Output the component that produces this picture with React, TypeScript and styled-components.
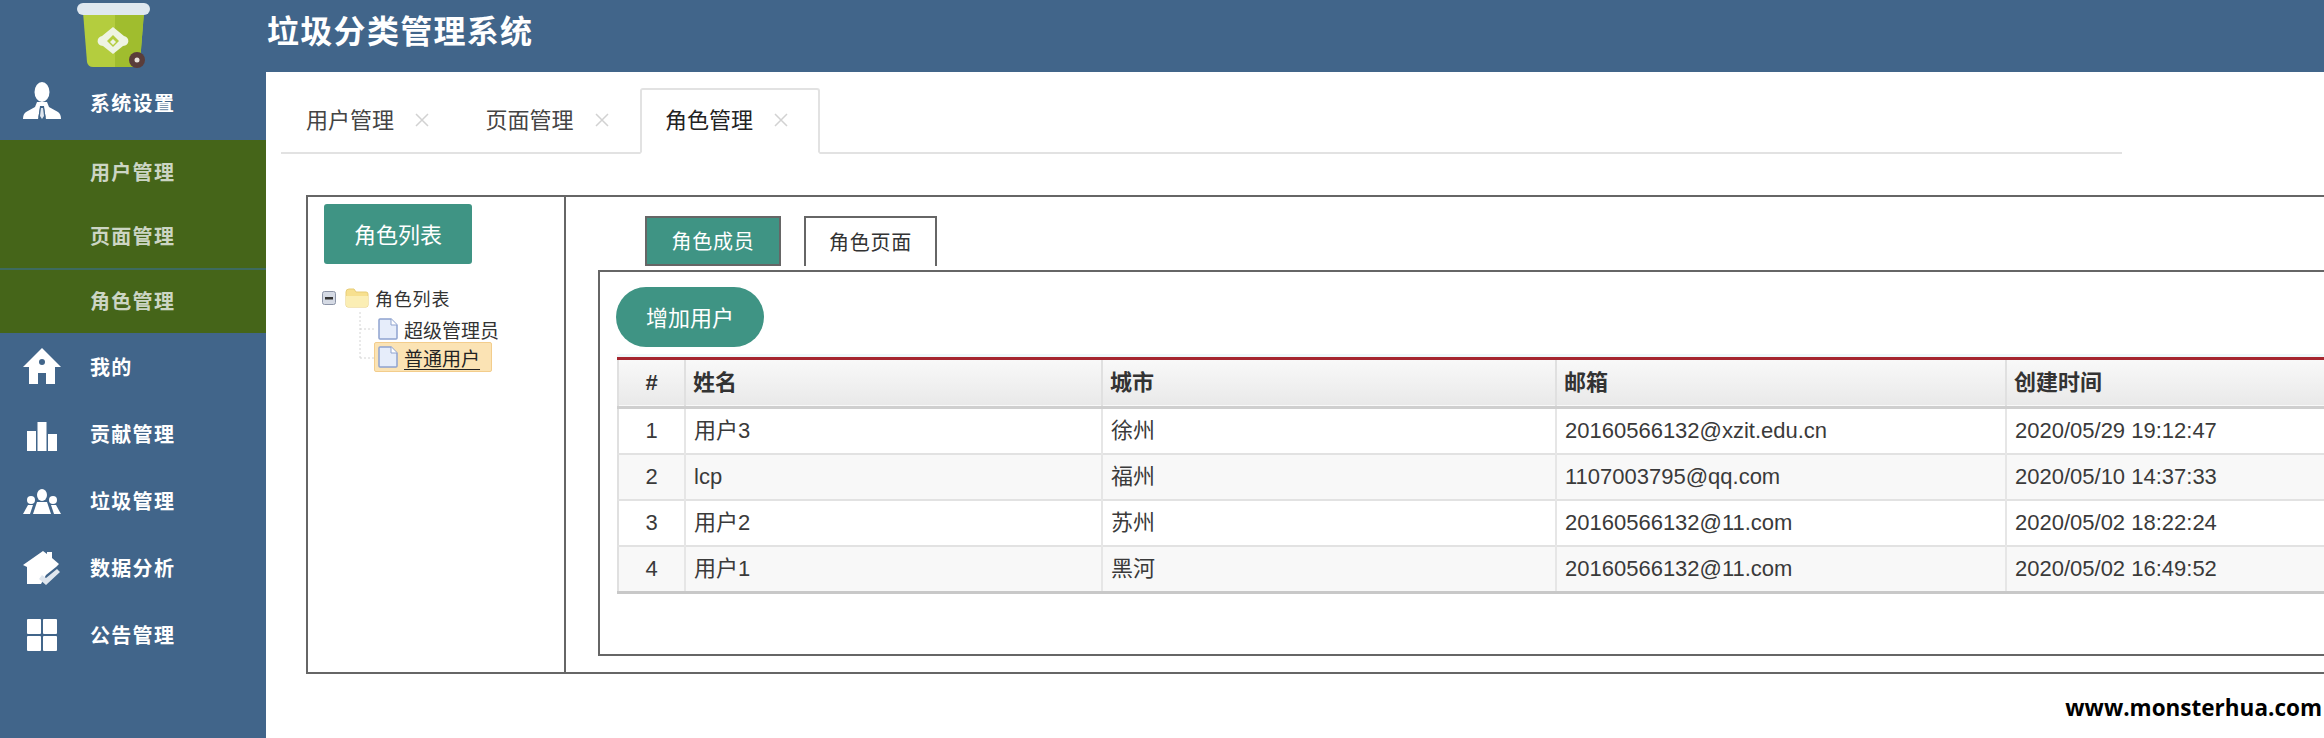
import React from "react";
import styled, { createGlobalStyle } from "styled-components";

const Global = createGlobalStyle`
  html, body { margin: 0; padding: 0; background: #fff; overflow: hidden; }
  body { font-family: "Liberation Sans", "Noto Sans CJK SC", sans-serif; color: #333; }
  * { box-sizing: border-box; }
`;

const Page = styled.div`
  display: flex;
  width: 2324px;
  height: 738px;
  overflow: hidden;
  position: relative;
`;
const Sidebar = styled.aside`
  flex: 0 0 266px;
  background: #41658a;
  display: flex;
  flex-direction: column;
`;
const LogoBox = styled.div`
  height: 68px;
  padding-left: 77px;
  display: flex;
  align-items: flex-start;
`;
const NavRow = styled.div<{ $h: number; $lift?: number }>`
  height: ${(p) => p.$h}px;
  padding-bottom: ${(p) => p.$lift ?? 0}px;
  display: flex;
  align-items: center;
  color: #fff;
  font-size: 20px;
  font-weight: 700;
  letter-spacing: 1.3px;
`;
const NavIcon = styled.span`
  flex: 0 0 90px;
  display: flex;
  justify-content: center;
  padding-right: 6px;
`;
const SubMenu = styled.div`
  background: #456519;
  height: 193px;
  display: flex;
  flex-direction: column;
`;
const SubRow = styled.div<{ $h: number; $line?: boolean }>`
  height: ${(p) => p.$h}px;
  padding: 0 0 2px 90px;
  display: flex;
  align-items: center;
  color: #ccd5c4;
  font-size: 20px;
  font-weight: 700;
  letter-spacing: 1.3px;
  border-bottom: ${(p) => (p.$line ? "2px solid #3d6a5f" : "none")};
`;
const Main = styled.main`
  flex: 1;
  min-width: 0;
  display: flex;
  flex-direction: column;
`;
const Header = styled.header`
  flex: 0 0 72px;
  background: #41658a;
  color: #fff;
  font-size: 32px;
  font-weight: 700;
  letter-spacing: 1.3px;
  display: flex;
  align-items: center;
  padding: 0 0 14px 1px;
`;
const TabStrip = styled.div`
  margin: 16px 0 0 15px;
  width: 1841px;
  height: 66px;
  border-bottom: 2px solid #e2e2e2;
  display: flex;
`;
const Tab = styled.div<{ $active?: boolean }>`
  flex: 0 0 179.5px;
  height: 66px;
  padding: 0 0 6px ${(p) => (p.$active ? "23px" : "25px")};
  display: flex;
  align-items: center;
  font-size: 22px;
  color: ${(p) => (p.$active ? "#222" : "#444")};
  background: ${(p) => (p.$active ? "#fff" : "transparent")};
  border: ${(p) => (p.$active ? "2px solid #e2e2e2" : "none")};
  border-bottom: ${(p) => (p.$active ? "2px solid #fff" : "none")};
  border-radius: 3px 3px 0 0;
`;
const TabClose = styled.span`
  margin: 3px 0 0 21px;
  display: flex;
`;
const Panel = styled.section`
  margin: 41px 0 0 40px;
  width: 2200px;
  height: 479px;
  border: 2px solid #666;
  display: flex;
`;
const LeftPane = styled.div`
  flex: 0 0 258px;
  border-right: 2px solid #666;
  padding: 7px 0 0 16px;
  display: flex;
  flex-direction: column;
`;
const PrimaryButton = styled.div<{ $pill?: boolean }>`
  width: 148px;
  height: 60px;
  background: #3f9484;
  color: #fff;
  font-size: 22px;
  padding-bottom: 2px;
  display: flex;
  align-items: center;
  justify-content: center;
  border-radius: ${(p) => (p.$pill ? "30px" : "3px")};
`;
const Tree = styled.div`
  margin: 22px 0 0 -2px;
  font-size: 18px;
  letter-spacing: 0.8px;
  color: #333;
  position: relative;
`;
const TreeRoot = styled.div`
  height: 24px;
  display: flex;
  align-items: center;
`;
const TreeToggle = styled.span`
  display: flex;
  margin-right: 9px;
`;
const TreeFolder = styled.span`
  display: flex;
  margin-right: 6px;
`;
const TreeChild = styled.div<{ $selected?: boolean }>`
  position: absolute;
  left: 52px;
  width: 118px;
  height: 30px;
  top: ${(p) => (p.$selected ? "56px" : "28px")};
  display: flex;
  align-items: center;
  gap: 5px;
  padding-left: 2px;
  white-space: nowrap;
  font-size: 19px;
  letter-spacing: 0;
  background: ${(p) => (p.$selected ? "#fbe3b4" : "transparent")};
  border: 1px solid ${(p) => (p.$selected ? "#f3cd8c" : "transparent")};
  border-radius: 2px;
`;
const TreeFile = styled.span`
  flex: 0 0 22px;
  display: flex;
`;
const TreeLabel = styled.span<{ $selected?: boolean }>`
  text-decoration: ${(p) => (p.$selected ? "underline" : "none")};
  text-underline-offset: 3px;
  color: ${(p) => (p.$selected ? "#222" : "#333")};
`;
const TreeLine = styled.svg`
  position: absolute;
  left: 37px;
  top: 26px;
`;
const RightPane = styled.div`
  flex: 1;
  display: flex;
  flex-direction: column;
  padding-top: 19px;
`;
const InnerTabs = styled.div`
  display: flex;
  gap: 23px;
  padding-left: 79px;
  height: 54px;
`;
const InnerTab = styled.div<{ $active?: boolean }>`
  width: ${(p) => (p.$active ? "136px" : "133px")};
  height: 50px;
  padding-bottom: 2px;
  border: 2px solid #666;
  border-bottom: ${(p) => (p.$active ? "2px solid #666" : "none")};
  background: ${(p) => (p.$active ? "#3f9484" : "#fff")};
  color: ${(p) => (p.$active ? "#fff" : "#333")};
  font-size: 20px;
  letter-spacing: 0.7px;
  display: flex;
  align-items: center;
  justify-content: center;
`;
const InnerBox = styled.div`
  margin-left: 32px;
  height: 386px;
  border: 2px solid #666;
  padding: 15px 0 0 16px;
`;
const TableFrame = styled.table`
  margin: 10px 0 0 1px;
  border-collapse: collapse;
  table-layout: fixed;
  width: 1900px;
  border-top: 3px solid #a5262f;
  box-shadow: 0 -3px 0 #eef8fa;
  border-bottom: 3px solid #c8c8c8;
  border-left: 2px solid #e0e0e0;
`;
const HeadRow = styled.tr`
  height: 49px;
  background: linear-gradient(#f9f9f9, #e9e9e9);
  border-bottom: 3px solid #cfcfcf;
`;
const HeadCell = styled.th<{ $center?: boolean }>`
  font-size: 22px;
  line-height: 26px;
  font-weight: 700;
  color: #333;
  text-align: ${(p) => (p.$center ? "center" : "left")};
  padding: 0 7px;
  border-right: 2px solid #e0e0e0;
`;
const BodyRow = styled.tr<{ $alt: boolean }>`
  height: 46px;
  background: ${(p) => (p.$alt ? "#f8f8f8" : "#fff")};
  border-bottom: 2px solid #e2e2e2;
  &:last-child {
    height: 47px;
  }
`;
const BodyCell = styled.td<{ $center?: boolean }>`
  font-size: 22px;
  line-height: 26px;
  color: #3a3a3a;
  text-align: ${(p) => (p.$center ? "center" : "left")};
  padding: 0 8px;
  border-right: 2px solid #e6e6e6;
  white-space: nowrap;
`;
const Watermark = styled.div`
  position: absolute;
  right: 2px;
  top: 692px;
  font-family: "Open Sans", "Liberation Sans", sans-serif;
  font-weight: 700;
  font-size: 22.5px;
  line-height: 32px;
  color: #000;
`;

const Logo = () => (
  <svg width="74" height="68" viewBox="0 0 74 68">
    <path d="M6 12h61l-4 50q-1 5-6 5H16q-5 0-6-5z" fill="#b4cd3e" />
    <path d="M38 12h29l-4 50q-1 5-6 5H38z" fill="#a0bd2e" />
    <rect x="0" y="3" width="73" height="12" rx="6" fill="#dfe8f0" />
    <path d="M36 27l11 9c6 1 6 10-1 10l-10 8-10-8c-7 0-7-9-1-10z" fill="#eef4e2" />
    <path d="M36 35l6 6-6 6-6-6z" fill="#b4cd3e" />
    <path d="M36 39l3 3-3 3-3-3z" fill="#eef4e2" />
    <circle cx="60" cy="60" r="8" fill="#5a3d3a" />
    <circle cx="60" cy="60" r="2.5" fill="#e8e2dd" />
  </svg>
);

const I = { width: 42, height: 42, viewBox: "0 0 42 42", fill: "#fff" };

const PersonIcon = () => (
  <svg {...I}>
    <ellipse cx="21" cy="11" rx="7.500" ry="10" />
    <path d="M16 21l-2 5-9 5q-3 2-3 7h15l2-11h4l2 11h15q0-5-3-7l-9-5-2-5z" />
    <path d="M19 25h4l1.500 11-3.500 4-3.500-4z" fill="#41658a" />
    <path d="M20 27h2l1 8-2 3-2-3z" fill="#dfe6ee" />
  </svg>
);
const HomeIcon = () => (
  <svg {...I}>
    <path d="M21 2L2 21h6v17h9V27h8v11h9V21h6z" />
    <circle cx="21" cy="16" r="3" fill="#41658a" />
  </svg>
);
const BarsIcon = () => (
  <svg {...I}>
    <rect x="6" y="18" width="9" height="20" />
    <rect x="16.500" y="9" width="9" height="29" />
    <rect x="27" y="21" width="9" height="17" />
  </svg>
);
const GroupIcon = () => (
  <svg {...I}>
    <ellipse cx="21" cy="15" rx="5" ry="6" />
    <circle cx="10" cy="20" r="4" />
    <circle cx="32" cy="20" r="4" />
    <path d="M12 34l4-12h10l4 12z" />
    <path d="M2 34l5-9h5l-3 9z" />
    <path d="M40 34l-5-9h-5l3 9z" />
  </svg>
);
const HomeCheckIcon = () => (
  <svg {...I}>
    <path d="M2 18L22 4l4 3V5h5v6l7 6-3 3-10 8-5 9H6V20z" />
    <path d="M18 32l7 6 14-13-3-3-11 9-4-3z" fill="#dfe6ee" />
  </svg>
);
const GridIcon = () => (
  <svg {...I}>
    <rect x="6" y="5" width="14" height="15" rx="1" />
    <rect x="22" y="5" width="14" height="15" rx="1" />
    <rect x="6" y="22" width="14" height="15" rx="1" />
    <rect x="22" y="22" width="14" height="15" rx="1" />
  </svg>
);

const CloseIcon = () => (
  <svg width="14" height="14" viewBox="0 0 14 14" stroke="#d2d2d2" strokeWidth="1.500" fill="none">
    <path d="M1 1l12 12M13 1L1 13" />
  </svg>
);

const MinusBox = () => (
  <svg width="14" height="14" viewBox="0 0 14 14">
    <rect x="0.5" y="0.5" width="13" height="13" rx="2" fill="#d5dae4" stroke="#8b93a6" />
    <rect x="3" y="6" width="8" height="2.500" fill="#333" />
  </svg>
);
const FolderIcon = () => (
  <svg width="24" height="20" viewBox="0 0 24 20">
    <path d="M1 4q0-3 3-3h5l2 3h10q2 0 2 2v11q0 2-2 2H3q-2 0-2-2z" fill="#f7e08f" stroke="#e7cc77" />
    <path d="M1 8h22v9q0 2-2 2H3q-2 0-2-2z" fill="#fbeeb4" />
  </svg>
);
const FileIcon = () => (
  <svg width="22" height="22" viewBox="0 0 22 22">
    <path d="M3 1h11l6 6v13q0 1-1 1H3q-1 0-1-1V2q0-1 1-1z" fill="#e6edfa" stroke="#8fa3cf" strokeWidth="1.500" />
    <path d="M14 1v6h6" fill="#fff" stroke="#8fa3cf" />
  </svg>
);

const rows = [
  ["1", "用户3", "徐州", "20160566132@xzit.edu.cn", "2020/05/29 19:12:47"],
  ["2", "lcp", "福州", "1107003795@qq.com", "2020/05/10 14:37:33"],
  ["3", "用户2", "苏州", "20160566132@11.com", "2020/05/02 18:22:24"],
  ["4", "用户1", "黑河", "20160566132@11.com", "2020/05/02 16:49:52"],
];

const tabs = [
  { label: "用户管理" },
  { label: "页面管理" },
  { label: "角色管理", active: true },
];

const navBelow = [
  { label: "我的", icon: <HomeIcon /> },
  { label: "贡献管理", icon: <BarsIcon /> },
  { label: "垃圾管理", icon: <GroupIcon /> },
  { label: "数据分析", icon: <HomeCheckIcon /> },
  { label: "公告管理", icon: <GridIcon /> },
];

export default function App() {
  return (
    <Page>
      <Global />
      <Sidebar>
        <LogoBox>
          <Logo />
        </LogoBox>
        <NavRow $h={72} $lift={4}>
          <NavIcon>
            <PersonIcon />
          </NavIcon>
          系统设置
        </NavRow>
        <SubMenu>
          <SubRow $h={64}>用户管理</SubRow>
          <SubRow $h={66} $line>
            页面管理
          </SubRow>
          <SubRow $h={63}>角色管理</SubRow>
        </SubMenu>
        {navBelow.map((n) => (
          <NavRow $h={67} key={n.label}>
            <NavIcon>{n.icon}</NavIcon>
            {n.label}
          </NavRow>
        ))}
      </Sidebar>
      <Main>
        <Header>垃圾分类管理系统</Header>
        <TabStrip>
          {tabs.map((t) => (
            <Tab key={t.label} $active={t.active}>
              {t.label}
              <TabClose>
                <CloseIcon />
              </TabClose>
            </Tab>
          ))}
        </TabStrip>
        <Panel>
          <LeftPane>
            <PrimaryButton>角色列表</PrimaryButton>
            <Tree>
              <TreeRoot>
                <TreeToggle>
                  <MinusBox />
                </TreeToggle>
                <TreeFolder>
                  <FolderIcon />
                </TreeFolder>
                角色列表
              </TreeRoot>
              <TreeLine width="16" height="48" viewBox="0 0 16 48" stroke="#d4d4d4" strokeDasharray="2 2" fill="none">
                <path d="M1 0v46M1 17h14M1 46h14" />
              </TreeLine>
              <TreeChild>
                <TreeFile>
                  <FileIcon />
                </TreeFile>
                <TreeLabel>超级管理员</TreeLabel>
              </TreeChild>
              <TreeChild $selected>
                <TreeFile>
                  <FileIcon />
                </TreeFile>
                <TreeLabel $selected>普通用户</TreeLabel>
              </TreeChild>
            </Tree>
          </LeftPane>
          <RightPane>
            <InnerTabs>
              <InnerTab $active>角色成员</InnerTab>
              <InnerTab>角色页面</InnerTab>
            </InnerTabs>
            <InnerBox>
              <PrimaryButton $pill>增加用户</PrimaryButton>
              <TableFrame>
                <colgroup>
                  <col width="67" />
                  <col width="417" />
                  <col width="454" />
                  <col width="450" />
                  <col width="512" />
                </colgroup>
                <thead>
                  <HeadRow>
                    <HeadCell $center>#</HeadCell>
                    <HeadCell>姓名</HeadCell>
                    <HeadCell>城市</HeadCell>
                    <HeadCell>邮箱</HeadCell>
                    <HeadCell>创建时间</HeadCell>
                  </HeadRow>
                </thead>
                <tbody>
                  {rows.map((r, i) => (
                    <BodyRow key={r[0]} $alt={i % 2 === 1}>
                      {r.map((c, j) => (
                        <BodyCell key={j} $center={j === 0}>
                          {c}
                        </BodyCell>
                      ))}
                    </BodyRow>
                  ))}
                </tbody>
              </TableFrame>
            </InnerBox>
          </RightPane>
        </Panel>
      </Main>
      <Watermark>www.monsterhua.com</Watermark>
    </Page>
  );
}
